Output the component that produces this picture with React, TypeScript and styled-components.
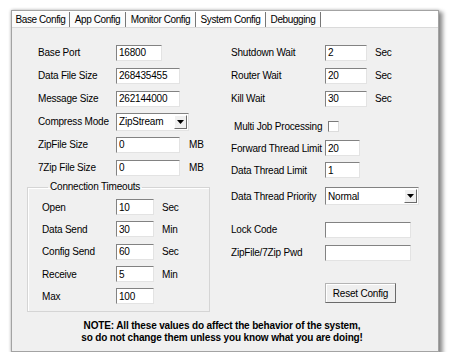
import React from 'react';
import styled, { createGlobalStyle } from 'styled-components';

const GlobalStyle = createGlobalStyle`
  body {
    margin: 0;
    background: #ffffff;
    font-family: "Liberation Sans", Arial, sans-serif;
    font-size: 10px;
    letter-spacing: -0.2px;
    color: #000;
  }
`;

const Window = styled.div`
  margin: 10px 0 0 11px;
  width: 428px;
  height: 342px;
  box-sizing: border-box;
  border: 1px solid #a3a3a3;
  background: #f0f0f0;
  box-shadow: 3px 3px 4px 1px rgba(0, 0, 0, 0.4), 0 0 3px rgba(0, 0, 0, 0.25);
  display: flex;
  flex-direction: column;
`;

const TabStrip = styled.div`
  height: 16px;
  display: flex;
  align-items: flex-end;
  background: #ffffff;
  border-bottom: 1px solid #dadada;
`;

const Tab = styled.div<{ $w: number; $active?: boolean }>`
  width: ${(p) => p.$w}px;
  height: 15px;
  line-height: 15px;
  box-sizing: border-box;
  text-align: center;
  white-space: nowrap;
  letter-spacing: -0.4px;
  border-right: 1px solid #777;
  background: ${(p) => (p.$active ? '#ffffff' : '#fbfbfb')};
  margin-top: ${(p) => (p.$active ? '-2px' : '0')};
`;

const Panel = styled.div`
  flex: 1;
  display: flex;
  flex-direction: column;
  padding-top: 13px;
`;

const Columns = styled.div`
  display: grid;
  grid-template-columns: 207px 1fr;
`;

const Column = styled.div<{ $pad: number }>`
  display: flex;
  flex-direction: column;
  padding-left: ${(p) => p.$pad}px;
`;

const Row = styled.div<{ $h?: number; $indent?: number; $mt?: number }>`
  display: flex;
  align-items: center;
  height: ${(p) => p.$h ?? 23}px;
  padding-left: ${(p) => p.$indent ?? 0}px;
  margin-top: ${(p) => p.$mt ?? 0}px;
`;

const Label = styled.span<{ $w: number }>`
  width: ${(p) => p.$w}px;
  flex: none;
  white-space: nowrap;
  overflow: hidden;
`;

const TextBox = styled.input<{ $w: number }>`
  width: ${(p) => p.$w}px;
  height: 16px;
  box-sizing: border-box;
  padding: 0 2px;
  margin: 0;
  font: inherit;
  letter-spacing: inherit;
  color: #000;
  background: #ffffff;
  border: 1px solid;
  border-color: #828282 #e3e3e3 #e3e3e3 #828282;
  outline: none;
`;

const Unit = styled.span<{ $ml: number }>`
  margin-left: ${(p) => p.$ml}px;
`;

const Select = styled.div<{ $w: number }>`
  width: ${(p) => p.$w}px;
  height: 18px;
  box-sizing: border-box;
  display: flex;
  align-items: center;
  background: #fff;
  border: 1px solid;
  border-color: #828282 #e3e3e3 #e3e3e3 #828282;
  padding: 1px;
`;

const SelectText = styled.span`
  flex: 1;
  padding-left: 1px;
`;

const DropButton = styled.div`
  width: 13px;
  height: 14px;
  box-sizing: border-box;
  display: flex;
  align-items: center;
  justify-content: center;
  background: #f0f0f0;
  border: 1px solid;
  border-color: #ffffff #6b6b6b #6b6b6b #ffffff;
`;

const CheckBox = styled.div`
  width: 11px;
  height: 11px;
  box-sizing: border-box;
  background: #fff;
  border: 1px solid;
  border-color: #7a7a7a #dcdcdc #dcdcdc #7a7a7a;
`;

const Group = styled.fieldset`
  margin: 2px 0 0 0;
  width: 183px;
  box-sizing: border-box;
  padding: 3px 0 4px 14px;
  border: 1px solid #d5d5d5;
  box-shadow: inset 1px 1px 0 #fff;
`;

const Legend = styled.legend`
  margin-left: 6px;
  padding: 0 2px;
  line-height: 12px;
`;

const Button = styled.div`
  margin-left: 94px;
  width: 71px;
  height: 20px;
  box-sizing: border-box;
  display: flex;
  align-items: center;
  justify-content: center;
  background: #efefef;
  border: 1px solid;
  border-color: #b4b4b4 #6a6a6a #6a6a6a #b4b4b4;
  box-shadow: inset 1px 1px 0 #fff;
`;

const Note = styled.div`
  margin-top: 8px;
  padding-right: 6px;
  text-align: center;
  font-weight: bold;
  line-height: 12px;
  letter-spacing: -0.15px;
`;

const tabs = [
  { name: 'Base Config', w: 58 },
  { name: 'App Config', w: 56 },
  { name: 'Monitor Config', w: 70 },
  { name: 'System Config', w: 70, active: true },
  { name: 'Debugging', w: 55 },
];

const Arrow = () => (
  <svg width="7" height="4" viewBox="0 0 7 4">
    <path d="M0 0h7L3.5 4z" fill="#000" />
  </svg>
);

const timeouts = [
  { label: 'Open', value: '10', unit: 'Sec' },
  { label: 'Data Send', value: '30', unit: 'Min' },
  { label: 'Config Send', value: '60', unit: 'Sec' },
  { label: 'Receive', value: '5', unit: 'Min' },
  { label: 'Max', value: '100', unit: '' },
];

export default function App() {
  return (
    <>
      <GlobalStyle />
      <Window>
        <TabStrip>
          {tabs.map((t) => (
            <Tab key={t.name} $w={t.w} $active={t.active}>
              {t.name}
            </Tab>
          ))}
        </TabStrip>
        <Panel>
          <Columns>
            <Column $pad={15}>
              <Row $indent={11}>
                <Label $w={78}>Base Port</Label>
                <TextBox $w={46} defaultValue="16800" readOnly />
              </Row>
              <Row $indent={11}>
                <Label $w={78}>Data File Size</Label>
                <TextBox $w={64} defaultValue="268435455" readOnly />
              </Row>
              <Row $indent={11}>
                <Label $w={78}>Message Size</Label>
                <TextBox $w={64} defaultValue="262144000" readOnly />
              </Row>
              <Row $indent={11}>
                <Label $w={78}>Compress Mode</Label>
                <Select $w={73}>
                  <SelectText>ZipStream</SelectText>
                  <DropButton>
                    <Arrow />
                  </DropButton>
                </Select>
              </Row>
              <Row $indent={11}>
                <Label $w={78}>ZipFile Size</Label>
                <TextBox $w={64} defaultValue="0" readOnly />
                <Unit $ml={9}>MB</Unit>
              </Row>
              <Row $indent={11}>
                <Label $w={78}>7Zip File Size</Label>
                <TextBox $w={64} defaultValue="0" readOnly />
                <Unit $ml={9}>MB</Unit>
              </Row>
              <Group>
                <Legend>Connection Timeouts</Legend>
                {timeouts.map((t) => (
                  <Row key={t.label} $h={22.3}>
                    <Label $w={74}>{t.label}</Label>
                    <TextBox $w={38} defaultValue={t.value} readOnly />
                    {t.unit && <Unit $ml={8}>{t.unit}</Unit>}
                  </Row>
                ))}
              </Group>
            </Column>
            <Column $pad={12}>
              <Row>
                <Label $w={94}>Shutdown Wait</Label>
                <TextBox $w={42} defaultValue="2" readOnly />
                <Unit $ml={8}>Sec</Unit>
              </Row>
              <Row>
                <Label $w={94}>Router Wait</Label>
                <TextBox $w={42} defaultValue="20" readOnly />
                <Unit $ml={8}>Sec</Unit>
              </Row>
              <Row>
                <Label $w={94}>Kill Wait</Label>
                <TextBox $w={42} defaultValue="30" readOnly />
                <Unit $ml={8}>Sec</Unit>
              </Row>
              <Row $mt={5} $indent={3}>
                <Label $w={94}>Multi Job Processing</Label>
                <CheckBox />
              </Row>
              <Row $h={20}>
                <Label $w={94}>Forward Thread Limit</Label>
                <TextBox $w={35} defaultValue="20" readOnly />
              </Row>
              <Row $h={24}>
                <Label $w={94}>Data Thread Limit</Label>
                <TextBox $w={35} defaultValue="1" readOnly />
              </Row>
              <Row $h={24} $mt={2}>
                <Label $w={94}>Data Thread Priority</Label>
                <Select $w={94}>
                  <SelectText>Normal</SelectText>
                  <DropButton>
                    <Arrow />
                  </DropButton>
                </Select>
              </Row>
              <Row $mt={10}>
                <Label $w={94}>Lock Code</Label>
                <TextBox $w={86} defaultValue="" readOnly />
              </Row>
              <Row>
                <Label $w={94}>ZipFile/7Zip Pwd</Label>
                <TextBox $w={86} defaultValue="" readOnly />
              </Row>
              <Row $h={20} $mt={19}>
                <Button>Reset Config</Button>
              </Row>
            </Column>
          </Columns>
          <Note>
            NOTE: All these values do affect the behavior of the system,
            <br />
            so do not change them unless you know what you are doing!
          </Note>
        </Panel>
      </Window>
    </>
  );
}
